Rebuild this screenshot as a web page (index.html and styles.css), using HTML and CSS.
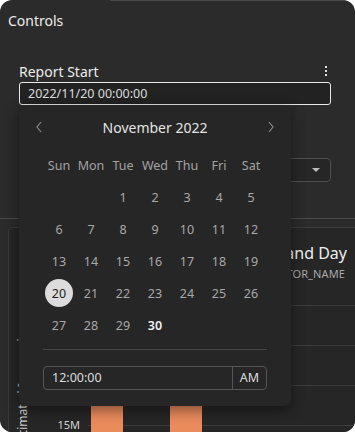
FILE: index.html
```html
<!DOCTYPE html>
<html lang="en">
<head>
    <meta charset="UTF-8">
    <meta name="viewport" content="width=device-width, initial-scale=1.0">
    <title>Controls</title>
    <link rel="stylesheet" href="styles.css">
</head>
<body>
    <div class="panel">
        <div class="tabline"></div>
        <h2 class="title">Controls</h2>

        <div class="control">
            <div class="control-head">
                <span>Report Start</span>
                <span class="kebab"><i></i><i></i><i></i></span>
            </div>
            <div class="date-input">2022/11/20 00:00:00</div>
        </div>

        <div class="control second">
            <div class="control-head"><span>Creator</span></div>
            <div class="select"><span>All</span><span class="caret"></span></div>
        </div>

        <div class="divider"></div>

        <div class="card">
            <div class="card-title"><span>Impressions by Hour and Day</span></div>
            <div class="card-sub"><span>SUM OF IMPRESSIONS BY CREATOR_NAME</span></div>
            <div class="plot">
                <div class="axis-title"><span>Estimated Impressions</span></div>
                <div class="axis-labels">
                    <span>30M</span><span>25M</span><span>20M</span><span>15M</span>
                </div>
                <div class="grid">
                    <div class="bar" style="height: 150px"></div>
                    <div class="bar" style="height: 150px"></div>
                </div>
            </div>
        </div>

        <div class="calendar">
            <div class="cal-head">
                <svg width="8" height="12" viewBox="0 0 8 12"><polyline points="6,1 2,6 6,11" fill="none" stroke="#8a8a8a" stroke-width="1.2"/></svg>
                <span class="month">November 2022</span>
                <svg width="8" height="12" viewBox="0 0 8 12"><polyline points="2,1 6,6 2,11" fill="none" stroke="#8a8a8a" stroke-width="1.2"/></svg>
            </div>
            <div class="cal-grid">
                <span class="wd">Sun</span><span class="wd">Mon</span><span class="wd">Tue</span><span class="wd">Wed</span><span class="wd">Thu</span><span class="wd">Fri</span><span class="wd">Sat</span>
                <span></span><span></span><span>1</span><span>2</span><span>3</span><span>4</span><span>5</span>
                <span>6</span><span>7</span><span>8</span><span>9</span><span>10</span><span>11</span><span>12</span>
                <span>13</span><span>14</span><span>15</span><span>16</span><span>17</span><span>18</span><span>19</span>
                <span><b class="selected">20</b></span><span>21</span><span>22</span><span>23</span><span>24</span><span>25</span><span>26</span>
                <span>27</span><span>28</span><span>29</span><span class="today">30</span><span></span><span></span><span></span>
            </div>
            <div class="cal-divider"></div>
            <div class="time-input">
                <span class="time">12:00:00</span>
                <span class="ampm">AM</span>
            </div>
        </div>
    </div>
</body>
</html>
```

FILE: styles.css
```css
* { box-sizing: border-box; }
body { margin: 0; background-color: #ffffff; font-family: 'Noto Sans', 'Open Sans', Arial, sans-serif; }
.panel { position: relative; width: 355px; height: 432px; background-color: #2b2b2b; border-radius: 12px; overflow: hidden; color: #e6e6e6; }
.tabline { height: 1px; margin-left: 110px; width: 235px; background-color: #4a4a4a; }
.title { margin: 0; padding: 12px 8px 0; font-size: 14px; line-height: 16px; font-weight: 400; color: #ececec; }
.control { padding: 0 24px 0 19px; margin-top: 33px; }
.control-head { display: flex; justify-content: space-between; align-items: center; height: 18px; font-size: 14px; color: #ececec; }
.kebab { display: flex; flex-direction: column; gap: 2px; margin-right: 4px; }
.kebab i { display: block; width: 2px; height: 2px; background-color: #e0e0e0; }
.date-input { margin-top: 2px; height: 23px; border: 1px solid #e8e8e8; border-radius: 3px; background-color: #222222; padding: 0 8px; font-size: 12.5px; line-height: 21px; color: #dddddd; }
.control.second { margin-top: 33px; }
.select { margin-top: 2px; height: 24px; border: 1px solid #505050; border-radius: 4px; background-color: #262626; display: flex; justify-content: space-between; align-items: center; padding: 0 10px; font-size: 12.5px; color: #cccccc; }
.caret { width: 0; height: 0; border-left: 4px solid transparent; border-right: 4px solid transparent; border-top: 4px solid #bbbbbb; }
.divider { margin-top: 36px; height: 1px; background-color: #4c4c4c; }
.card { margin: 8px 0 0 8px; width: 360px; height: 220px; border: 1px solid #3a3a3a; border-radius: 4px; background-color: #262626; padding: 15px 0 0 9px; }
.card-title, .card-sub { display: flex; justify-content: flex-end; overflow: hidden; white-space: nowrap; }
.card-title { width: 329px; font-size: 16px; line-height: 20px; color: #eeeeee; }
.card-sub { width: 327px; margin-top: 4px; font-size: 11px; line-height: 14px; color: #a8a8a8; letter-spacing: 0.1px; }
.plot { display: flex; margin-top: 5px; height: 200px; }
.axis-title { width: 14px; display: flex; align-items: center; justify-content: center; padding-bottom: 7px; }
.axis-title span { writing-mode: vertical-rl; transform: rotate(180deg); font-size: 12px; color: #cfcfcf; white-space: nowrap; margin-left: -5px; }
.axis-labels { width: 48px; display: flex; flex-direction: column; align-items: flex-end; padding-top: 12px; gap: 26px; font-size: 11px; line-height: 14px; color: #d4d4d4; }
.grid { flex: 1; margin-left: 8px; display: flex; align-items: flex-start; gap: 47px; padding: 85px 0 0 3px; background-image: repeating-linear-gradient(to bottom, #3c3c3c 0, #3c3c3c 1px, transparent 1px, transparent 40px); background-position: 0 19px; }
.bar { width: 32px; background: linear-gradient(to bottom, #d27448, #ea8b5c 30px); }
.calendar { position: absolute; left: 19px; top: 105px; width: 272px; height: 301px; background-color: #262626; border-radius: 0 0 6px 6px; box-shadow: 0 4px 14px rgba(0, 0, 0, 0.45); padding: 0 24px; }
.cal-head { display: flex; justify-content: space-between; align-items: center; height: 44px; margin: 0 -8px 0 -8px; }
.month { font-size: 14px; font-weight: 400; color: #e4e4e4; }
.cal-grid { display: grid; grid-template-columns: repeat(7, 32px); grid-auto-rows: 32px; font-size: 12.5px; color: #a9a9a9; }
.cal-grid span { display: flex; align-items: center; justify-content: center; }
.cal-grid .wd { color: #a3a3a3; }
.cal-grid .today { color: #f0f0f0; font-weight: 600; }
.selected { width: 28px; height: 28px; border-radius: 50%; background-color: #dcdcdc; color: #222222; font-weight: 400; display: flex; align-items: center; justify-content: center; }
.cal-divider { margin-top: 8px; height: 1px; background-color: #474747; }
.time-input { margin-top: 16px; height: 24px; border: 1px solid #555555; border-radius: 4px; display: flex; font-size: 12.5px; color: #dddddd; }
.time { flex: 1; padding-left: 8px; line-height: 22px; }
.ampm { width: 34px; border-left: 1px solid #555555; text-align: center; line-height: 22px; }
```
